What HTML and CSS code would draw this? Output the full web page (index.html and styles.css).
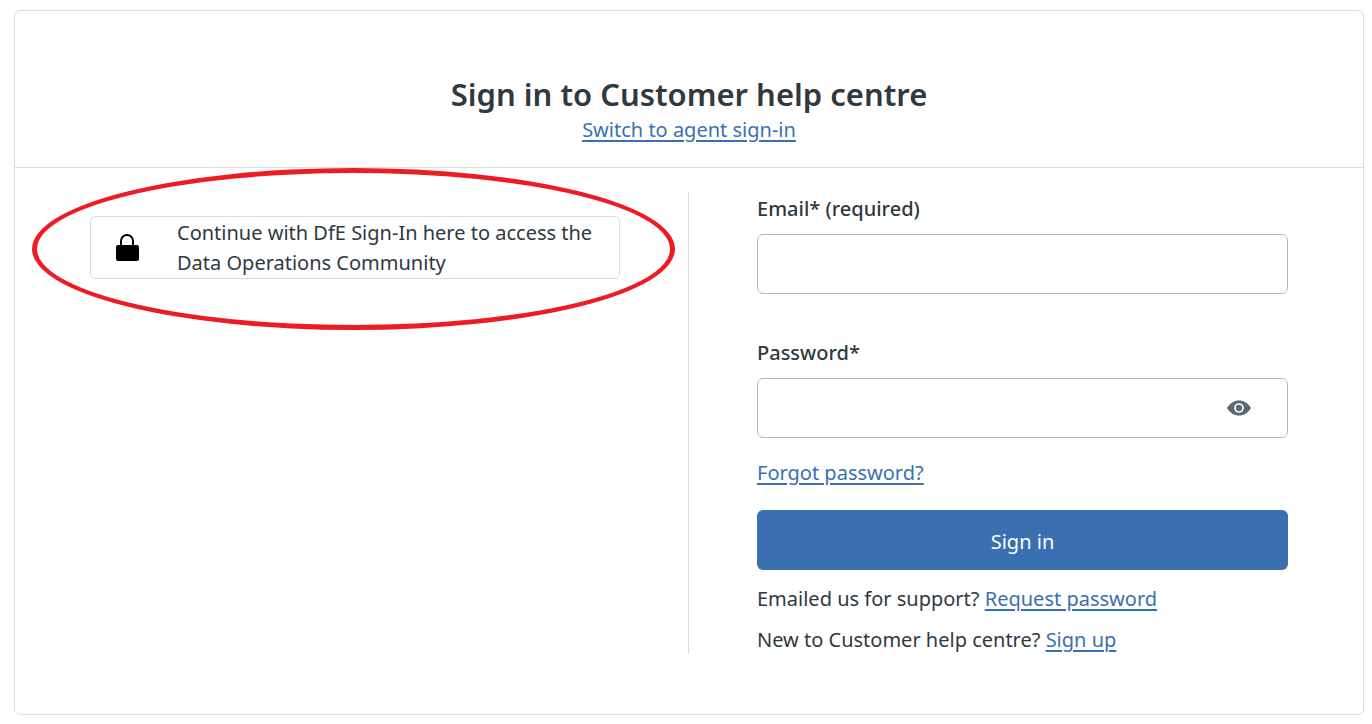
FILE: index.html
```html
<!DOCTYPE html>
<html lang="en">
<head>
  <meta charset="UTF-8" />
  <meta name="viewport" content="width=device-width, initial-scale=1.0"/>
  <title>Sign in to Customer help centre</title>
  <link rel="stylesheet" href="styles.css">
</head>
<body>
  <main class="card">
    <header class="card-header">
      <h1>Sign in to Customer help centre</h1>
      <a href="#">Switch to agent sign-in</a>
    </header>

    <div class="columns">
      <section class="sso">
        <button type="button" class="sso-btn">
          <svg class="lock-icon" viewBox="0 0 24 27" aria-hidden="true">
            <path d="M6 12V7a6 6 0 0 1 12 0v5" fill="none" stroke="#000" stroke-width="2"/>
            <rect x="1" y="11" width="23" height="16" rx="2"/>
          </svg>
          <span>Continue with DfE Sign-In here to access the Data Operations Community</span>
        </button>
        <span class="highlight"></span>
      </section>

      <form class="login">
        <div class="field">
          <label for="email">Email* (required)</label>
          <input type="email" id="email" required />
        </div>
        <div class="field">
          <label for="password">Password*</label>
          <div class="password-box">
            <input type="password" id="password" required />
            <button type="button" class="show-btn" aria-label="Show password">
              <svg viewBox="0 0 24 16" aria-hidden="true">
                <path d="M0 8C3 3 7 0.5 12 0.5s9 2.500 12 7.500c-3 5-7 7.500-12 7.500S3 13 0 8z" fill="#5c6970"/>
                <circle cx="12" cy="8" r="4" fill="none" stroke="#fff" stroke-width="1.7"/>
              </svg>
            </button>
          </div>
        </div>
        <a href="#" class="forgot">Forgot password?</a>
        <button type="submit" class="submit-btn">Sign in</button>
        <p>Emailed us for support? <a href="#">Request password</a></p>
        <p>New to Customer help centre? <a href="#">Sign up</a></p>
      </form>
    </div>
  </main>

  <script>
    const password = document.getElementById("password");

    document.querySelector(".show-btn").addEventListener("click", function () {
      password.type = password.type === "password" ? "text" : "password";
    });
  </script>
</body>
</html>
```
FILE: styles.css
```css
* {
  box-sizing: border-box;
}
body {
  font-family: "Noto Sans", sans-serif;
  font-size: 20px;
  line-height: 30px;
  color: #2f3941;
  background: #fff;
  margin: 0;
  padding: 10px 8px 8px 14px;
}
button, input {
  font: inherit;
}
a {
  color: #3a70b2;
  text-decoration-thickness: 2px;
  text-underline-offset: 3px;
}
.card {
  border: 1px solid #d8dcde;
  border-radius: 6px;
  padding-bottom: 60px;
}
.card-header {
  padding: 62px 20px 22px;
  text-align: center;
  border-bottom: 1px solid #d8dcde;
}
h1 {
  margin: 0;
  font-size: 31px;
  font-weight: 600;
  line-height: 42px;
}
.columns {
  display: grid;
  grid-template-columns: 1fr 1fr;
  padding-top: 24px;
}
.sso {
  position: relative;
  padding: 24px 68px 0 75px;
  border-right: 1px solid #d8dcde;
}
.sso-btn {
  display: flex;
  align-items: center;
  gap: 38px;
  width: 100%;
  min-height: 63px;
  padding: 0 24px;
  border: 1px solid #d8dcde;
  border-radius: 5px;
  background: #fff;
  color: #2f3941;
  text-align: left;
  cursor: pointer;
}
.sso-btn span {
  padding-top: 1px;
}
.lock-icon {
  flex: none;
  width: 24px;
  height: 27px;
}
/* red ring drawn over the sign-in option */
.highlight {
  position: absolute;
  top: -24px;
  left: 17px;
  right: 13px;
  height: 162px;
  border: 5px solid #ed1c24;
  border-radius: 50%;
  pointer-events: none;
}
.login {
  padding: 2px 75px 0 68px;
}
.field {
  margin-bottom: 44px;
}
.field + .field {
  margin-bottom: 20px;
}
label {
  display: block;
  margin-bottom: 10px;
  font-weight: 500;
}
input {
  display: block;
  width: 100%;
  height: 60px;
  padding: 0 20px;
  border: 1px solid #b0b8be;
  border-radius: 6px;
}
.password-box {
  position: relative;
}
.password-box input {
  padding-right: 80px;
}
.show-btn {
  position: absolute;
  top: 10px;
  right: 29px;
  width: 40px;
  height: 40px;
  padding: 0 8px;
  border: none;
  background: none;
  cursor: pointer;
}
.show-btn svg {
  display: block;
  width: 24px;
  height: 16px;
}
.forgot {
  display: block;
  width: fit-content;
}
.submit-btn {
  width: 100%;
  height: 60px;
  margin: 22px 0 14px;
  padding-top: 4px;
  border: none;
  border-radius: 6px;
  background: #3a70b2;
  color: #fff;
  cursor: pointer;
}
p {
  margin: 0 0 12px;
}
p:last-child {
  margin: 0;
  line-height: 28px;
}
```
